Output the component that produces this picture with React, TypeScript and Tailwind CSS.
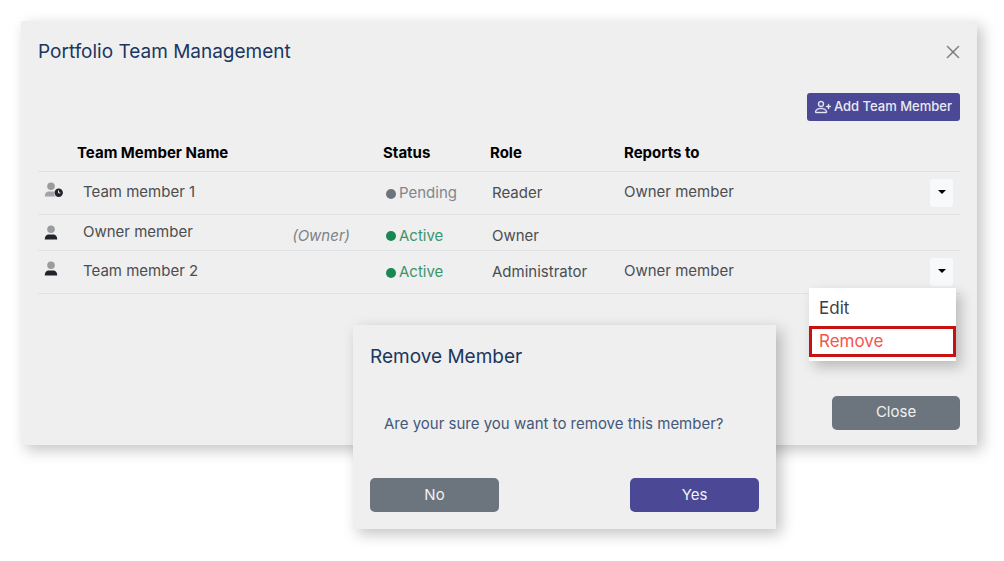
import { BsPersonPlus, BsXLg } from "react-icons/bs";

type Member = {
  name: string;
  status: "Pending" | "Active";
  role: string;
  reportsTo?: string;
  owner?: boolean;
  menuOpen?: boolean;
};

const members: Member[] = [
  { name: "Team member 1", status: "Pending", role: "Reader", reportsTo: "Owner member" },
  { name: "Owner member", status: "Active", role: "Owner", owner: true },
  { name: "Team member 2", status: "Active", role: "Administrator", reportsTo: "Owner member", menuOpen: true },
];

function PersonIcon({ pending }: { pending: boolean }) {
  return (
    <svg width="20" height="16" viewBox="0 0 20 16" aria-hidden="true">
      <circle cx="7" cy="4.2" r="3.8" fill="#9b9c9d" />
      <path
        d="M.8 14.600c0-3.700 1.600-5.200 4.300-5.200h3.800c2.700 0 4.300 1.500 4.300 5.200z"
        fill={pending ? "#a3a4a5" : "#212529"}
      />
      {pending && (
        <>
          <circle cx="14.700" cy="10.700" r="4.900" fill="#efefef" />
          <circle cx="14.700" cy="10.700" r="4.200" fill="#212529" />
          <path d="M14.500 8.500v2.400h1.800" fill="none" stroke="#efefef" strokeWidth="1" />
        </>
      )}
    </svg>
  );
}

function StatusLabel({ status }: { status: Member["status"] }) {
  const color = status === "Active" ? "text-[#198754]" : "text-[#6c757d]";
  return (
    <span className={`flex items-center gap-[3px] ${color}`}>
      <span className="size-[10px] rounded-full bg-current" />
      <span className="opacity-85">{status}</span>
    </span>
  );
}

function RowMenu({ name, open }: { name: string; open?: boolean }) {
  return (
    <div className="relative w-[23px]">
      <button
        type="button"
        aria-label={`Actions for ${name}`}
        className="flex h-7 w-[23px] items-center justify-center rounded-[3px] bg-[#f8f9fa]"
      >
        <svg width="8" height="4" viewBox="0 0 8 4" className="mb-[2px]" aria-hidden="true">
          <path d="M0 0h8L4 4z" fill="#000" />
        </svg>
      </button>
      {open && (
        <div className="absolute top-[30px] -right-[3px] z-10 w-[147px] bg-white pt-1 pb-1 text-[17px] shadow-[5px_6px_12px_rgba(0,0,0,0.22)]">
          <button type="button" className="block h-[34px] w-full px-[10px] text-left text-[#3c4045]">
            Edit
          </button>
          <button
            type="button"
            className="block h-[31px] w-full border-3 border-[#c61212] px-[7px] text-left leading-[22px] text-[#f4564d]"
          >
            Remove
          </button>
        </div>
      )}
    </div>
  );
}

export default function App() {
  return (
    <main className="min-h-screen bg-white pt-[21px] pr-[27px] pb-8 pl-[21px] font-['Inter',sans-serif] text-[15px] text-[#4b4d50]">
      <section
        aria-label="Portfolio Team Management"
        className="relative flex flex-col bg-[#efefef] px-[17px] pt-[17px] pb-[15px] shadow-[5px_5px_14px_rgba(0,0,0,0.24)]"
      >
        <header className="flex h-7 items-center justify-between">
          <h1 className="text-[19px] text-[#1b365f]">Portfolio Team Management</h1>
          <button type="button" aria-label="Close window" className="-mr-px text-[#747474]">
            <BsXLg size={16} strokeWidth={0.5} />
          </button>
        </header>

        <button
          type="button"
          className="mt-[27px] flex h-7 items-center gap-[3px] self-end rounded-[3px] bg-[#4b4996] px-2 text-[13px] font-medium text-[#e9e9f4]"
        >
          <BsPersonPlus size={16} strokeWidth={0.4} />
          Add Team Member
        </button>

        <table className="mt-[14px] w-full table-fixed border-collapse text-left">
          <colgroup>
            <col className="w-[39px]" />
            <col className="w-[306px]" />
            <col className="w-[107px]" />
            <col className="w-[134px]" />
            <col />
            <col className="w-[30px]" />
          </colgroup>
          <thead>
            <tr className="h-9 border-b border-[#dee2e6] text-black">
              <th aria-label="Type" />
              <th className="font-bold">Team Member Name</th>
              <th className="font-bold">Status</th>
              <th className="font-bold">Role</th>
              <th className="font-bold">Reports to</th>
              <th aria-label="Actions" />
            </tr>
          </thead>
          <tbody>
            {members.map((m) => {
              const shift = m.owner ? "pt-2" : "pt-[2px]";
              return (
                <tr key={m.name} className={`border-b border-[#dee2e6] ${m.owner ? "h-9" : "h-[43px]"}`}>
                  <td className="pt-[10px] pl-[6px] align-top">
                    <PersonIcon pending={m.status === "Pending"} />
                  </td>
                  <td className="pl-[6px]">
                    <div className="flex items-center justify-between pr-[33px]">
                      {m.name}
                      {m.owner && <em className="pt-2 text-[#7c8288]">(Owner)</em>}
                    </div>
                  </td>
                  <td className={`pl-[3px] ${shift}`}>
                    <StatusLabel status={m.status} />
                  </td>
                  <td className={`pl-[2px] ${shift}`}>{m.role}</td>
                  <td>{m.reportsTo}</td>
                  <td>{m.reportsTo && <RowMenu name={m.name} open={m.menuOpen} />}</td>
                </tr>
              );
            })}
          </tbody>
        </table>

        <button
          type="button"
          className="mt-[102px] h-[34px] w-32 self-end rounded-[5px] bg-[#6c757d] text-[#f0f1f2]"
        >
          Close
        </button>

        <div
          role="dialog"
          aria-labelledby="remove-title"
          className="absolute top-[304px] left-[332px] z-20 flex w-[423px] flex-col bg-[#efefef] px-[17px] pt-[18px] pb-[17px] shadow-[5px_5px_14px_rgba(0,0,0,0.24)]"
        >
          <h2 id="remove-title" className="text-[19px] leading-7 text-[#1b365f]">
            Remove Member
          </h2>
          <p className="mt-[41px] pl-[14px] leading-6 text-[#44587b]">
            Are your sure you want to remove this member?
          </p>
          <div className="mt-[42px] flex justify-between">
            <button type="button" className="h-[34px] w-[129px] rounded-[5px] bg-[#6c757d] text-[#f0f1f2]">
              No
            </button>
            <button type="button" className="h-[34px] w-[129px] rounded-[5px] bg-[#4b4996] text-[#f1f1f8]">
              Yes
            </button>
          </div>
        </div>
      </section>
    </main>
  );
}
